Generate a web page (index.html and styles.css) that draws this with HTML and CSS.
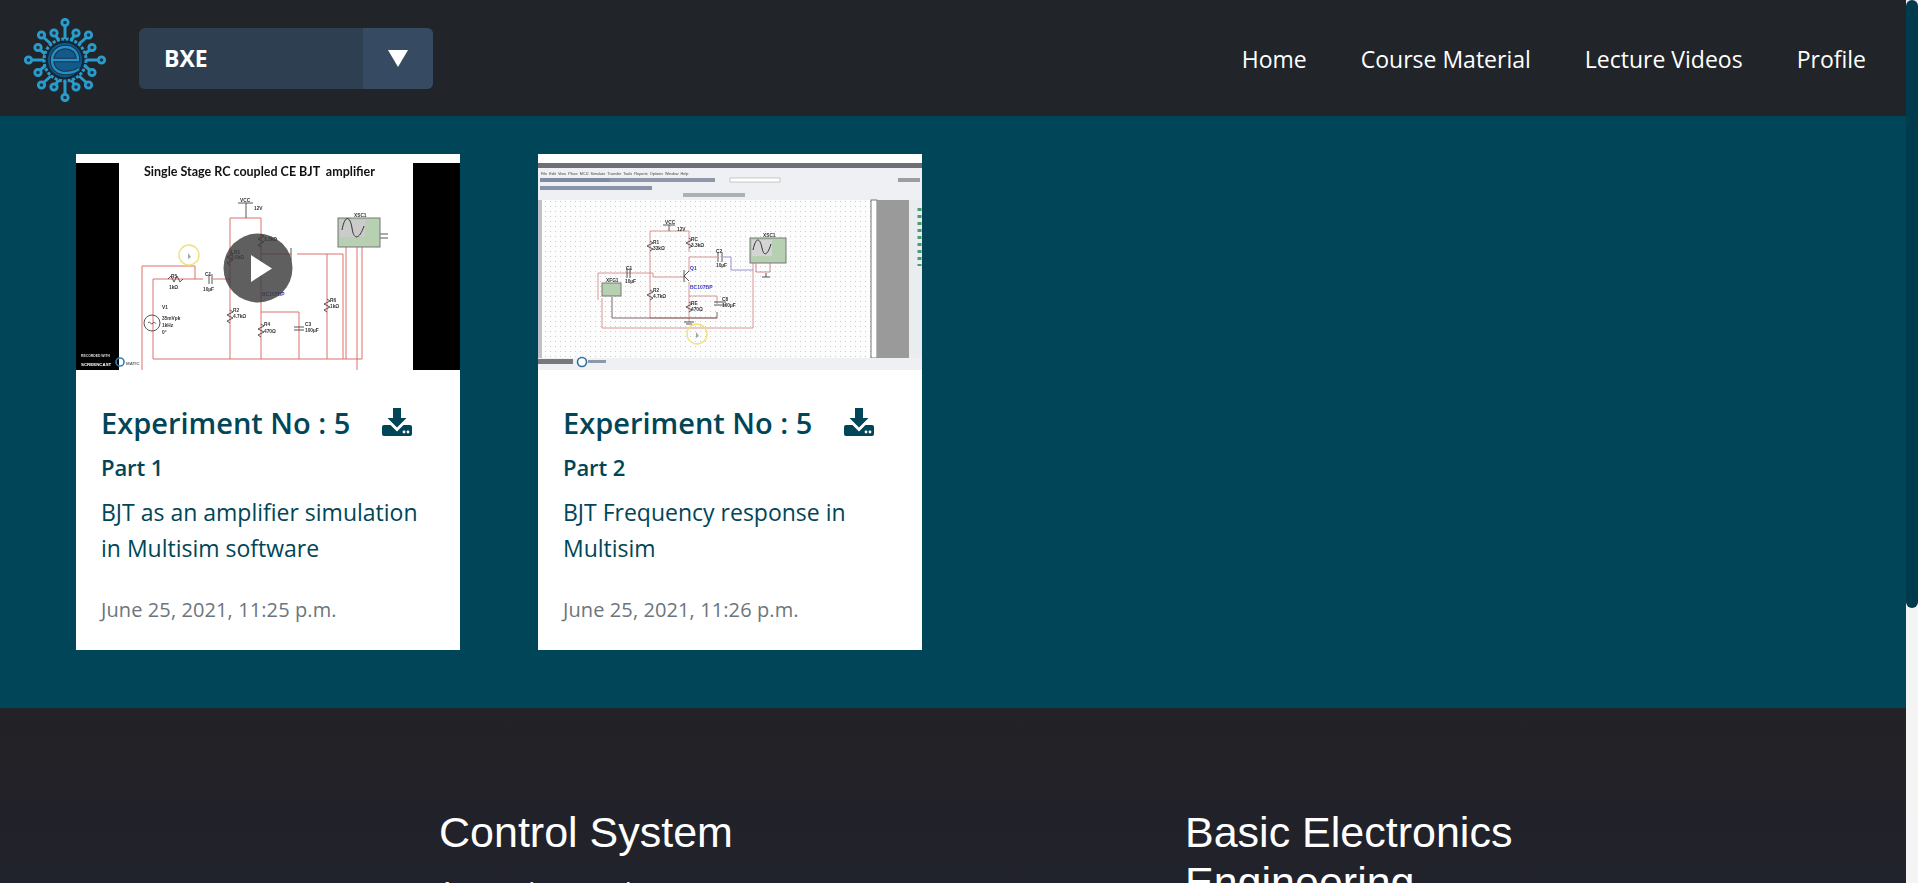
FILE: index.html
```html
<!DOCTYPE html>
<html lang="en">
<head>
<meta charset="utf-8">
<title>BXE</title>
<link rel="stylesheet" href="styles.css">
</head>
<body>
<div class="page">
  <header class="topbar">
    <div class="brand">
      <svg class="logo" viewBox="0 0 84 84" width="84" height="84" aria-hidden="true">
        <g stroke="#2a9ccb" stroke-width="3" fill="none">
          <path d="M42 21V6M42 63V78M21 42H7M63 42H77"/>
          <path d="M36 22L31 16M48 22L53 16M36 62L31 68M48 62L53 68"/>
          <path d="M28 26L19 18M56 26L65 18M28 58L19 66M56 58L65 66"/>
          <path d="M22 36L15 30M62 36L69 30M22 48L15 54M62 48L69 54"/>
          <g stroke-width="2.800" fill="#1c3442">
            <circle cx="42" cy="4.500" r="3.200"/><circle cx="42" cy="79.500" r="3.200"/><circle cx="5.500" cy="42" r="3.200"/><circle cx="78.500" cy="42" r="3.200"/>
            <circle cx="31" cy="15" r="3.200"/><circle cx="53" cy="15" r="3.200"/><circle cx="31" cy="69" r="3.200"/><circle cx="53" cy="69" r="3.200"/>
            <circle cx="18.500" cy="17" r="3.200"/><circle cx="65.500" cy="17" r="3.200"/><circle cx="18.500" cy="67" r="3.200"/><circle cx="65.500" cy="67" r="3.200"/>
            <circle cx="15" cy="29.500" r="3.200"/><circle cx="69" cy="29.500" r="3.200"/><circle cx="15" cy="54.500" r="3.200"/><circle cx="69" cy="54.500" r="3.200"/>
          </g>
          <circle cx="42" cy="42" r="21" stroke-width="3" stroke-dasharray="3 1.500"/>
          <circle cx="42" cy="42" r="18" fill="#135a8a" stroke="#0b2c44" stroke-width="2"/>
          <path d="M28 42H55C55 33 49 29 42.500 29C34.500 29 29 35 29 42.500C29 50 34.500 55 42.500 55C47 55 52 54 56 51" stroke="#1a2f45" stroke-width="4.500"/>
          <path d="M28 42H55C55 33 49 29 42.500 29C34.500 29 29 35 29 42.500C29 50 34.500 55 42.500 55C47 55 52 54 56 51" stroke="#2390c8" stroke-width="2.400"/>
        </g>
      </svg>
      <div class="select">
        <span class="select-label">BXE</span>
        <span class="select-arrow"><svg viewBox="0 0 20 17" width="20" height="17" aria-hidden="true"><path d="M0 0H20L10 17Z" fill="#fff"/></svg></span>
      </div>
    </div>
    <nav class="nav">
      <a>Home</a>
      <a>Course Material</a>
      <a>Lecture Videos</a>
      <a>Profile</a>
    </nav>
  </header>

  <main class="content">
    <article class="card">
      <svg class="thumb" viewBox="0 0 384 216" aria-hidden="true">
        <g class="soft">
          <rect width="384" height="216" fill="#fff"/>
          <rect y="9" width="43" height="207" fill="#000"/>
          <rect x="337" y="9" width="47" height="207" fill="#000"/>
          <text class="t-title" x="68" y="22">Single Stage RC coupled CE BJT  amplifier</text>
          <g fill="none" stroke="#d8605c" stroke-width="0.9">
            <path d="M154 64H185M154 64V205M185 64V205M77 205H286"/>
            <path d="M66 216V112H119V125M77 205V125H127M137 125H154"/>
            <path d="M185 100H215M221 100H267V205M251 100V205M270 92V205M286 90V205M281 92V216"/>
            <path d="M185 158H223V205"/>
          </g>
          <g fill="none" stroke="#444" stroke-width="0.9">
            <path d="M162 49H177M170 49V64"/>
            <path d="M92 125L95 122L98 128L101 122L104 128L107 125"/>
            <path d="M133 120V130M136 120V130"/>
            <circle cx="76" cy="169" r="8"/>
            <path d="M72 169C74 166 75 172 77 169C78 167 79 170 80 169"/>
            <path d="M154 98L157 100L151 103L157 106L151 109L154 111"/>
            <path d="M154 156L157 158L151 161L157 164L151 167L154 169"/>
            <path d="M185 80L188 82L182 85L188 88L182 91L185 93"/>
            <path d="M185 170L188 172L182 175L188 178L182 181L185 183"/>
            <path d="M251 145L254 147L248 150L254 153L248 156L251 158"/>
            <path d="M218 173H228M218 176H228"/>
            <path d="M215 94V106"/>
            <path d="M304 80H312M304 84H312"/>
          </g>
          <rect x="262" y="64" width="42" height="29" fill="#b6d0b1" stroke="#777"/>
          <rect x="264" y="66" width="25" height="17" fill="#cbcbcb"/>
          <path d="M266 76C269 60 274 62 276 74C278 88 284 84 288 72" stroke="#333" fill="none"/>
          <circle cx="113" cy="101" r="10" fill="none" stroke="#efe27a" stroke-width="1.400"/>
          <path d="M112 99V105L115 103Z" fill="#9aa"/>
          <g class="t-small">
            <text x="164" y="48">VCC</text><text x="178" y="56">12V</text>
            <text x="95" y="124">R5</text><text x="93" y="135">1kΩ</text>
            <text x="129" y="122">C1</text><text x="127" y="137">10µF</text>
            <text x="86" y="155">V1</text><text x="86" y="166">35mVpk</text><text x="86" y="173">1kHz</text><text x="86" y="180">0°</text>
            <text x="157" y="158">R2</text><text x="157" y="164">4.7kΩ</text><text x="188" y="172">R4</text><text x="188" y="179">470Ω</text>
            <text x="229" y="172">C3</text><text x="229" y="178">100µF</text><text x="254" y="148">R6</text><text x="254" y="154">1kΩ</text>
            <text x="278" y="63">XSC1</text><text x="155" y="100">LR1</text><text x="155" y="105">3.0kΩ</text><text x="188" y="87">3.3kΩ</text>
          </g>
          <text class="t-blue" x="186" y="142">BC107BP</text>
          <text class="t-mark" x="5" y="203">RECORDED WITH</text>
          <text class="t-cast" x="5" y="212">SCREENCAST</text>
          <text class="t-matic" x="50" y="211">MATIC</text>
          <circle cx="44" cy="208" r="4" fill="none" stroke="#2f7fb8" stroke-width="1.600"/>
        </g>
        <circle class="play-disc" cx="182" cy="114" r="34.500"/>
        <path d="M175 101L196 114.500L175 128Z" fill="#fff"/>
      </svg>
      <div class="card-body">
        <h3 class="card-title">Experiment No : 5
          <svg class="dl" viewBox="0 0 30 28" width="30" height="28" aria-hidden="true"><path d="M11 0H19V10H24.500L15 19.500L5.500 10H11ZM2 17H8.500L15 23.500L21.500 17H28A2 2 0 0 1 30 19V26A2 2 0 0 1 28 28H2A2 2 0 0 1 0 26V19A2 2 0 0 1 2 17Z" fill="#004658"/><circle cx="22" cy="24" r="1.400" fill="#fff"/><circle cx="26" cy="24" r="1.400" fill="#fff"/></svg>
        </h3>
        <h4 class="card-part">Part 1</h4>
        <p class="card-text">BJT as an amplifier simulation in Multisim software</p>
        <p class="card-date">June 25, 2021, 11:25 p.m.</p>
      </div>
    </article>

    <article class="card">
      <svg class="thumb" viewBox="0 0 384 216" aria-hidden="true">
        <defs>
          <pattern id="dots" width="5" height="5" patternUnits="userSpaceOnUse"><rect x="2" y="2" width="1" height="1" fill="#cbcbcb"/></pattern>
        </defs>
        <g class="soft">
          <rect width="384" height="216" fill="#fff"/>
          <rect y="9" width="384" height="5" fill="#6e6e74"/>
          <rect y="14" width="384" height="32" fill="#eef0f3"/>
          <text class="t-menu" x="3" y="20.500">File  Edit  View  Place  MCU  Simulate  Transfer  Tools  Reports  Options  Window  Help</text>
          <rect x="2" y="24" width="70" height="4" fill="#7f8ba3"/>
          <rect x="72" y="24" width="105" height="4" fill="#8e97a8"/>
          <rect x="192" y="24" width="50" height="4" fill="#fff" stroke="#999" stroke-width="0.5"/>
          <rect x="2" y="32" width="112" height="4" fill="#8a94a8"/>
          <rect x="145" y="39" width="62" height="4" fill="#aab2b6"/>
          <rect x="360" y="24" width="22" height="4" fill="#9a9da3"/>
          <rect x="0" y="46" width="384" height="158" fill="#fdfdfd"/>
          <rect x="0" y="46" width="384" height="158" fill="url(#dots)"/>
          <rect x="0" y="46" width="4" height="158" fill="#bfc1c4"/>
          <rect x="333" y="46" width="6" height="158" fill="#fff" stroke="#555" stroke-width="0.8"/>
          <rect x="339" y="46" width="32" height="158" fill="#9a9a9a"/>
          <rect x="371" y="46" width="13" height="158" fill="#e9edf0"/>
          <path class="side-items" d="M381.500 54V112"/>
          <g fill="none" stroke="#d68a8a" stroke-width="0.9">
            <path d="M112 77H151V98M112 77V164H179M151 103V118M151 128V168"/>
            <path d="M60 146V119H115V123H146M151 103H179M151 142H179V150"/>
            <path d="M215 107V174H64V144"/>
          </g>
          <path d="M185 103H193V116H215" fill="none" stroke="#8a88d8" stroke-width="0.9"/>
          <path d="M74 143V164H179V158" fill="none" stroke="#6b5555" stroke-width="0.9"/>
          <g fill="none" stroke="#444" stroke-width="0.9">
            <path d="M125 71H137M131 71V77"/>
            <path d="M112 87L115 89L109 92L115 95L112 97M151 84L154 86L148 89L154 92L151 94M112 136L115 138L109 141L115 144L112 146M151 148L154 150L148 153L154 156L151 158"/>
            <path d="M89 114V124M92 114V124M180 98V108M184 98V108M176 148H188M176 151H188"/>
            <path d="M146 116V128M146 122L151 117M146 122L151 127"/>
            <path d="M146 168H156M148 170H154M228 119V123M224 123H232"/>
          </g>
          <rect x="212" y="84" width="36" height="25" fill="#b6d0b1" stroke="#777"/>
          <rect x="214" y="86" width="20" height="16" fill="#d4d4d4"/>
          <path d="M215 96C218 82 222 84 224 94C226 104 230 100 233 90" stroke="#333" fill="none"/>
          <path d="M218 109V118H232V109" fill="none" stroke="#c96a6a" stroke-width="0.8"/>
          <rect x="64" y="129" width="19" height="13" fill="#b6d0b1" stroke="#777"/>
          <circle cx="159" cy="180" r="10" fill="none" stroke="#efe27a" stroke-width="1.400"/>
          <path d="M158 178V184L161 182Z" fill="#9aa"/>
          <g class="t-small">
            <text x="127" y="70">VCC</text><text x="139" y="77">12V</text>
            <text x="115" y="90">R1</text><text x="115" y="96">33kΩ</text>
            <text x="153" y="87">RC</text><text x="153" y="93">3.3kΩ</text>
            <text x="178" y="99">C2</text><text x="178" y="113">10µF</text>
            <text x="88" y="116">C1</text><text x="87" y="129">10µF</text>
            <text x="115" y="138">R2</text><text x="115" y="144">4.7kΩ</text>
            <text x="153" y="151">RE</text><text x="153" y="157">470Ω</text>
            <text x="184" y="147">C8</text><text x="184" y="153">100µF</text>
            <text x="225" y="83">XSC1</text><text x="68" y="128">XFG1</text>
          </g>
          <text class="t-blue" x="152" y="116">Q1</text>
          <text class="t-blue" x="152" y="135">BC107BP</text>
          <rect x="0" y="204" width="384" height="12" fill="#eef0f3"/>
          <rect x="0" y="205" width="35" height="5" fill="#77797c"/>
          <rect x="50" y="206" width="18" height="3" fill="#8b99a8"/>
          <circle cx="44" cy="208" r="4.500" fill="#fff" stroke="#2f6f9f" stroke-width="1.600"/>
        </g>
      </svg>
      <div class="card-body">
        <h3 class="card-title">Experiment No : 5
          <svg class="dl" viewBox="0 0 30 28" width="30" height="28" aria-hidden="true"><path d="M11 0H19V10H24.500L15 19.500L5.500 10H11ZM2 17H8.500L15 23.500L21.500 17H28A2 2 0 0 1 30 19V26A2 2 0 0 1 28 28H2A2 2 0 0 1 0 26V19A2 2 0 0 1 2 17Z" fill="#004658"/><circle cx="22" cy="24" r="1.400" fill="#fff"/><circle cx="26" cy="24" r="1.400" fill="#fff"/></svg>
        </h3>
        <h4 class="card-part">Part 2</h4>
        <p class="card-text">BJT Frequency response in Multisim</p>
        <p class="card-date">June 25, 2021, 11:26 p.m.</p>
      </div>
    </article>
  </main>

  <footer class="footer">
    <section class="foot-col">
      <h2 class="foot-title">Control System</h2>
      <p class="foot-text">A control system is a system of</p>
    </section>
    <section class="foot-col">
      <h2 class="foot-title">Basic Electronics Engineering</h2>
    </section>
  </footer>
</div>
<aside class="scrollbar"><div class="scrollbar-thumb"></div></aside>
</body>
</html>
```
FILE: styles.css
```css
* { box-sizing: border-box; }
html, body { margin: 0; height: 100%; overflow: hidden; }
body {
  display: flex;
  font-family: "Open Sans", "Noto Sans", sans-serif;
  background: #f4f4f5;
}
.page {
  flex: 1;
  min-width: 0;
  height: 883px;
  overflow: hidden;
  display: flex;
  flex-direction: column;
}
.topbar {
  flex: 0 0 116px;
  background: #212529;
  display: flex;
  align-items: center;
  justify-content: space-between;
  padding: 0 40px 0 23px;
}
.brand { display: flex; align-items: center; gap: 32px; }
.logo { display: block; margin-top: 3px; }
.select {
  width: 294px;
  height: 61px;
  border-radius: 6px;
  background: #2f3f52;
  color: #fff;
  display: flex;
  justify-content: space-between;
  overflow: hidden;
}
.select-label {
  align-self: center;
  padding-left: 25px;
  font-size: 23px;
  font-weight: 700;
}
.select-arrow {
  width: 70px;
  background: #364a61;
  display: flex;
  align-items: center;
  justify-content: center;
}
.nav { display: flex; gap: 54px; margin-top: 2px; }
.nav a {
  color: #fff;
  font-size: 23px;
}
.content {
  flex: 0 0 592px;
  background: #004658;
  display: flex;
  gap: 78px;
  padding: 38px 76px 0;
}
.card {
  width: 384px;
  height: 496px;
  background: #fff;
  display: flex;
  flex-direction: column;
}
.thumb { display: block; width: 384px; height: 216px; }
.soft { filter: blur(0.35px); }
.side-items { stroke: #4f9a6c; stroke-width: 4; stroke-dasharray: 3 4; fill: none; }
.t-title { font: 700 12.500px Lato, "Liberation Sans", sans-serif; fill: #111; white-space: pre; }
.t-small text { font: 700 4.800px "Liberation Sans", sans-serif; fill: #333; }
.t-mark { font: 700 3.400px "Liberation Sans", sans-serif; fill: #ddd; }
.t-cast { font: 700 4.400px "Liberation Sans", sans-serif; fill: #fff; }
.t-matic { font: 700 4.400px "Liberation Sans", sans-serif; fill: #666; }
.t-menu { font: 3.800px "Liberation Sans", sans-serif; fill: #444; white-space: pre; }
.t-blue { font: 700 5px "Liberation Sans", sans-serif; fill: #3a3ac4; }
.play-disc { fill: rgba(60, 60, 60, 0.82); }
.card-body { padding: 34px 25px 0; color: #004658; }
.card-title {
  margin: 0 0 9px;
  font-size: 29px;
  line-height: 38px;
  font-weight: 600;
  display: flex;
  align-items: center;
  gap: 32px;
}
.dl { flex: none; margin-top: -3px; }
.card-part {
  margin: 0 0 11px;
  font-size: 22px;
  line-height: 32px;
  font-weight: 600;
  letter-spacing: -0.1px;
}
.card-text {
  margin: 0 0 29px;
  font-size: 23px;
  line-height: 36px;
}
.card-date {
  margin: 0;
  font-size: 20px;
  line-height: 30px;
  letter-spacing: 0.1px;
  color: #6c757d;
}
.footer {
  flex: 1;
  background: linear-gradient(#232226, #20232d);
  color: #fff;
  font-family: "Liberation Sans", Arial, sans-serif;
  display: grid;
  grid-template-columns: 334px 334px;
  column-gap: 412px;
  padding: 99px 0 0 439px;
}
.foot-title {
  margin: 0;
  font-size: 43px;
  line-height: 50px;
  font-weight: 400;
}
.foot-text {
  margin: 18px 0 0;
  font-size: 24.500px;
  line-height: 32px;
}
.scrollbar {
  flex: 0 0 12px;
  height: 883px;
  background: #f4f4f5;
}
.scrollbar-thumb {
  height: 608px;
  background: #003b4d;
  border-radius: 6px;
}
```
